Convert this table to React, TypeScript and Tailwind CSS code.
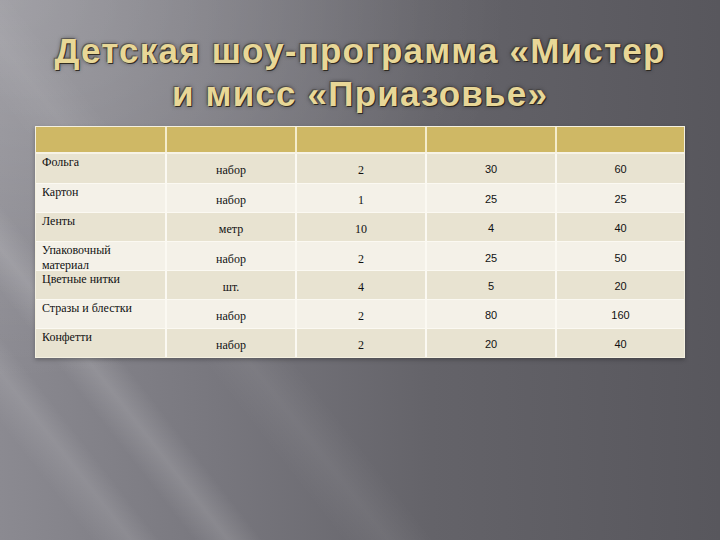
import React from "react";

const rows: { name: string[]; unit: string; qty: string; price: string; sum: string; dark: boolean }[] = [
  { name: ["Фольга"], unit: "набор", qty: "2", price: "30", sum: "60", dark: true },
  { name: ["Картон"], unit: "набор", qty: "1", price: "25", sum: "25", dark: false },
  { name: ["Ленты"], unit: "метр", qty: "10", price: "4", sum: "40", dark: true },
  { name: ["Упаковочный", "материал"], unit: "набор", qty: "2", price: "25", sum: "50", dark: false },
  { name: ["Цветные нитки"], unit: "шт.", qty: "4", price: "5", sum: "20", dark: true },
  { name: ["Стразы и блестки"], unit: "набор", qty: "2", price: "80", sum: "160", dark: false },
  { name: ["Конфетти"], unit: "набор", qty: "2", price: "20", sum: "40", dark: true },
];

const serif = "font-['Liberation_Serif','Times_New_Roman',serif]";

export default function App() {
  return (
    <div className="w-[720px] h-[540px] overflow-hidden bg-[linear-gradient(52deg,transparent_8%,rgba(255,255,255,0.10)_11.5%,transparent_14%,transparent_17%,rgba(255,255,255,0.13)_20%,transparent_23%,transparent_30%,rgba(255,255,255,0.06)_34%,transparent_38%),radial-gradient(ellipse_at_0%_0%,rgba(255,255,255,0.2),transparent_50%),linear-gradient(90deg,#8b8a91_0%,#78777e_30%,#646369_60%,#58575d_100%)] flex flex-col">
      <div className="pt-[29px] text-center font-['Liberation_Sans',Arial,sans-serif] font-bold text-[35px] leading-[43px] tracking-[1.2px] text-[#e8d797] [text-shadow:1px_1px_0_rgba(40,35,25,0.9),-1px_-1px_0_rgba(60,55,45,0.5),0_0_4px_rgba(0,0,0,0.55)]">
        <div>Детская шоу-программа «Мистер</div>
        <div>и мисс «Приазовье»</div>
      </div>
      <div className="ml-[35px] mt-[11px] w-[650px] border border-[#f4f0e0] shadow-[0_2px_4px_rgba(0,0,0,0.25)]">
        <div className="grid grid-cols-[129px_130px_130px_130px_129px] h-[27px] bg-[#cfb865] border-b-2 border-[#f7f3e6]">
          <div />
          <div className="border-l-2 border-[#f4eccb]" />
          <div className="border-l-2 border-[#f4eccb]" />
          <div className="border-l-2 border-[#f4eccb]" />
          <div className="border-l-2 border-[#f4eccb]" />
        </div>
        {rows.map((r, i) => (
          <div
            key={i}
            className={`grid grid-cols-[129px_130px_130px_130px_129px] h-[29px] ${i > 0 ? "border-t border-[#fbf9f2]" : ""} ${r.dark ? "bg-[#e8e3d1]" : "bg-[#f4f1e8]"} text-[#111]`}
          >
            <div className={`pl-[6px] pt-[1px] ${serif} text-[12px] leading-[15px] whitespace-nowrap`}>
              {r.name.map((n, j) => (
                <div key={j}>{n}</div>
              ))}
            </div>
            <div className={`border-l-2 border-[#fbf9f2] flex items-center justify-center pt-[3px] ${serif} text-[12px]`}>
              {r.unit}
            </div>
            <div className={`border-l-2 border-[#fbf9f2] flex items-center justify-center pt-[3px] ${serif} text-[12px]`}>
              {r.qty}
            </div>
            <div className="border-l-2 border-[#fbf9f2] flex items-center justify-center pt-[2px] font-['Liberation_Sans',Arial,sans-serif] text-[11px]">
              {r.price}
            </div>
            <div className="border-l-2 border-[#fbf9f2] flex items-center justify-center pt-[2px] font-['Liberation_Sans',Arial,sans-serif] text-[11px]">
              {r.sum}
            </div>
          </div>
        ))}
      </div>
    </div>
  );
}
